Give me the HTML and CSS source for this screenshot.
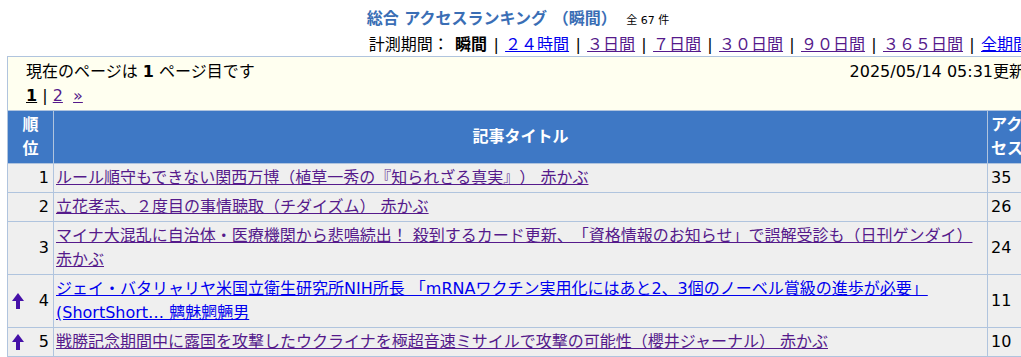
FILE: index.html
```html
<!DOCTYPE html>
<html lang="ja">
<head>
    <meta charset="UTF-8">
    <title>総合 アクセスランキング（瞬間）</title>
    <link rel="stylesheet" href="styles.css">
</head>
<body>

    <div class="page">
        <div class="top-cut">総合</div>

        <div class="head">
            <h1 class="title">総合 アクセスランキング （瞬間） <small>全 67 件</small></h1>
            <div class="period">
                計測期間： <b>瞬間</b> |
                <a href="#" class="new">２４時間</a> |
                <a href="#">３日間</a> |
                <a href="#">７日間</a> |
                <a href="#">３０日間</a> |
                <a href="#">９０日間</a> |
                <a href="#">３６５日間</a> |
                <a href="#" class="new">全期間</a>
            </div>
        </div>

        <div class="pager">
            <div class="pager-row">
                <span>現在のページは <b>1</b> ページ目です</span>
                <span class="updated">2025/05/14 05:31更新</span>
            </div>
            <div class="pages">
                <b class="current">1</b> | <a href="#">2</a>&nbsp; <a href="#">&raquo;</a>
            </div>
        </div>

        <table class="rank">
            <colgroup>
                <col class="c-rank">
                <col>
                <col class="c-count">
            </colgroup>
            <tr>
                <th>順<br>位</th>
                <th>記事タイトル</th>
                <th class="th-count">アクセス</th>
            </tr>
            <tr>
                <td class="num">1</td>
                <td><a href="#">ルール順守もできない関西万博（植草一秀の『知られざる真実』） 赤かぶ</a></td>
                <td class="count">35</td>
            </tr>
            <tr>
                <td class="num">2</td>
                <td><a href="#">立花孝志、２度目の事情聴取（チダイズム） 赤かぶ</a></td>
                <td class="count">26</td>
            </tr>
            <tr>
                <td class="num">3</td>
                <td><a href="#">マイナ大混乱に自治体・医療機関から悲鳴続出！ 殺到するカード更新、「資格情報のお知らせ」で誤解受診も（日刊ゲンダイ） 赤かぶ</a></td>
                <td class="count">24</td>
            </tr>
            <tr>
                <td class="num">
                    <svg class="up" viewBox="0 0 12 16" width="12" height="16"><path d="M6 0 L12 8 L8 8 L8 16 L4 16 L4 8 L0 8 Z"/></svg>4
                </td>
                <td><a href="#" class="new">ジェイ・バタリャリヤ米国立衛生研究所NIH所長 「mRNAワクチン実用化にはあと2、3個のノーベル賞級の進歩が必要」(ShortShort… 魑魅魍魎男</a></td>
                <td class="count">11</td>
            </tr>
            <tr>
                <td class="num">
                    <svg class="up" viewBox="0 0 12 16" width="12" height="16"><path d="M6 0 L12 8 L8 8 L8 16 L4 16 L4 8 L0 8 Z"/></svg>5
                </td>
                <td><a href="#">戦勝記念期間中に露国を攻撃したウクライナを極超音速ミサイルで攻撃の可能性（櫻井ジャーナル） 赤かぶ</a></td>
                <td class="count">10</td>
            </tr>
        </table>
    </div>

</body>
</html>
```

FILE: styles.css
```css
html {
    overflow: hidden;
}

body {
    margin: 0;
    background-color: #ffffff;
    color: #000000;
    font-family: "DejaVu Sans", "Noto Sans CJK JP", sans-serif;
    font-size: 16px;
    text-spacing-trim: space-all;
}

a {
    color: #551a8b;
}

a.new {
    color: #0000ee;
}

.page {
    width: 1022px;
    padding-left: 7px;
}

.top-cut {
    font-weight: bold;
    line-height: 20px;
    margin-top: -17px;
}

.head {
    text-align: center;
    padding-top: 2px;
}

.title {
    margin: 0;
    font-size: 16px;
    line-height: 28px;
    color: #3a6eb5;
}

.title small {
    font-size: 11px;
    line-height: 1;
    font-weight: normal;
    color: #000000;
    margin-left: 4px;
}

.period {
    text-align: right;
    line-height: 23px;
    word-spacing: 1.2px;
}

.pager {
    background-color: #fffff0;
    border: 1px solid #b0c4de;
    border-bottom: none;
    padding: 3px 0 2px 18px;
    line-height: 24px;
}

.pager-row {
    display: flex;
    justify-content: space-between;
}

.updated {
    margin-right: 3px;
}

.current {
    text-decoration: underline;
}

.rank {
    width: 100%;
    border-collapse: collapse;
    table-layout: fixed;
    border: 1px solid #b0c4de;
    line-height: 24px;
}

.c-rank {
    width: 46px;
}

.c-count {
    width: 41px;
}

.rank th {
    background-color: #3e78c5;
    color: #ffffff;
    font-weight: bold;
    padding: 2px 3px;
    border: 1px solid #b0c4de;
    border-top: none;
}

.rank th.th-count {
    text-align: left;
}

.rank td {
    background-color: #efefef;
    border: 1px solid #b0c4de;
    padding: 2px 2px;
}

.rank td.num {
    text-align: right;
    padding-right: 4px;
    padding-left: 4px;
}

.rank td.count {
    padding-left: 3px;
}

.up {
    float: left;
    margin-top: 4px;
    fill: #4510a8;
}
```
